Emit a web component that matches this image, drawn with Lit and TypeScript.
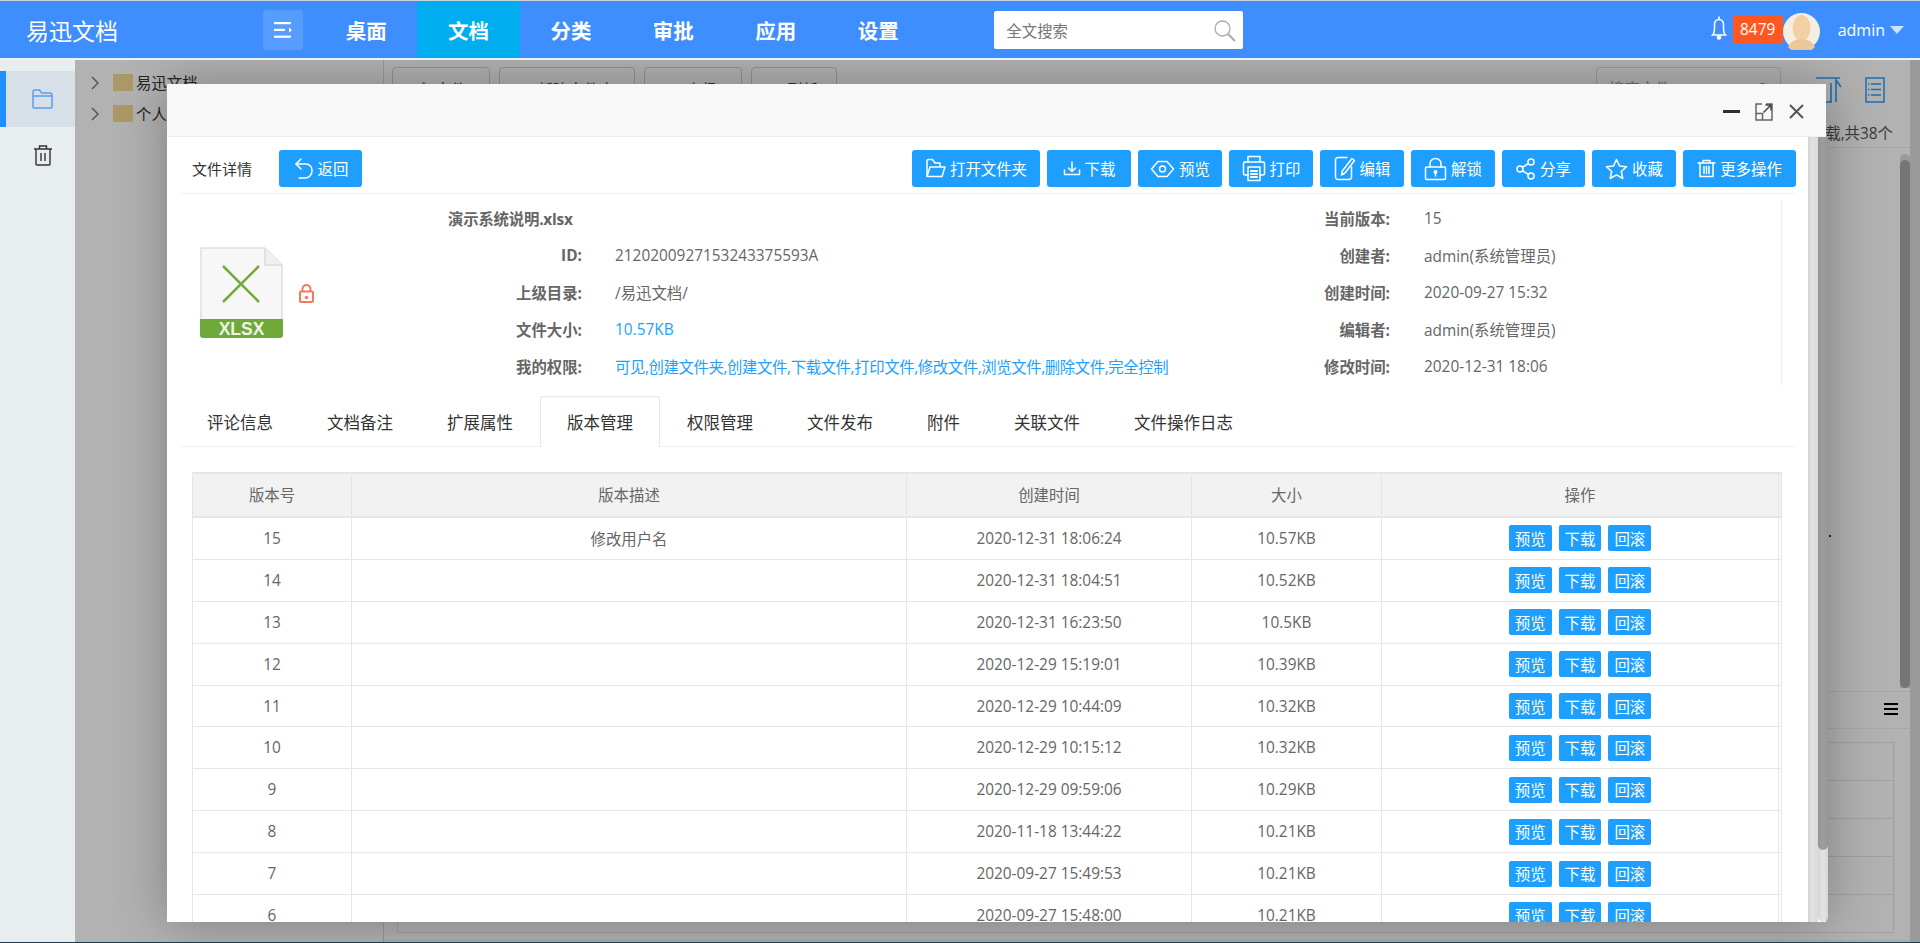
import { LitElement, html, css, svg } from 'lit';
import { customElement } from 'lit/decorators.js';

const stroke = (w: number, h: number, body: unknown, sw = 1.5) => html`<svg width=${w} height=${h} viewBox="0 0 ${w} ${h}" fill="none" stroke="currentColor" stroke-width=${sw} stroke-linejoin="round" stroke-linecap="round">${body}</svg>`;

const icons = {
  back: stroke(21, 24, svg`<path d="M8 2 3 7l5 5"/><path d="M3 7h10a6 6 0 0 1 6 6v1a7 7 0 0 1-7 7H6"/>`),
  folder: stroke(21, 21, svg`<path d="M2 18V3a1.5 1.5 0 0 1 1.5-1.5h4L10 5h5v3"/><path d="M2 18.5 5 9h15l-3 9.500z"/>`),
  download: stroke(18, 15, svg`<path d="M9 1v9"/><path d="M5.500 7 9 10.500 12.500 7"/><path d="M1.500 9v4.500h15V9"/>`),
  eye: stroke(25, 18, svg`<path d="M1.500 9 8 1.500h9L23.500 9 17 16.500H8z"/><circle cx="12.500" cy="9" r="3"/>`),
  print: stroke(24, 27, svg`<path d="M6 7V1.500h12V7"/><path d="M6 20H3a1.500 1.500 0 0 1-1.500-1.500v-10A1.500 1.500 0 0 1 3 7h18a1.500 1.500 0 0 1 1.500 1.500v10A1.500 1.500 0 0 1 21 20h-3"/><rect x="6" y="12" width="12" height="13.500"/><path d="M9 16h6M9 19h6M9 22h6" stroke-width="2"/>`),
  edit: stroke(22, 25, svg`<path d="M13 1.500H4A2.500 2.500 0 0 0 1.500 4v17A2.500 2.500 0 0 0 4 23.500h11a2.500 2.500 0 0 0 2.500-2.500V11"/><path d="M18 2.500l2.500 2L11 17l-3.500 2 .8-4z"/>`),
  lock: stroke(23, 24, svg`<rect x="1.500" y="10" width="20" height="12.500" rx="1"/><path d="M6 10V6.500a5.500 5 0 0 1 11 0V10"/><circle cx="11.500" cy="15" r="1.200"/><path d="M11.500 16v3"/>`),
  share: stroke(20, 22, svg`<circle cx="4" cy="11" r="3"/><circle cx="15" cy="4" r="3"/><circle cx="15" cy="18" r="3"/><path d="M6.500 9.200 12.500 5.500M6.500 12.800l6 3.700"/>`),
  star: stroke(23, 22, svg`<path d="M11.500 1.500 14.500 8l7 .8-5.200 4.700 1.500 7-6.300-3.600L5.200 20.500l1.500-7L1.500 8.800l7-.8z"/>`),
  trash: stroke(19, 19, svg`<path d="M1 4h17M6 4V1.500h7V4"/><path d="M3 4v13.500h13V4"/><path d="M7 7.500v7M9.500 7.500v7M12 7.500v7"/>`),
  file: html`<svg width="83" height="92" viewBox="0 0 83 92">
    <path d="M1 1h64l17 17v56H1z" fill="#f7f7f7" stroke="#e0e0e0" stroke-width="1.500"/>
    <path d="M65 1v17h17" fill="#f0f0f0" stroke="#dcdcdc" stroke-width="1.500"/>
    <path d="M23 19 59 55M59 19 23 55" stroke="#74a93e" stroke-width="2.500"/>
    <path d="M0 72h83v16a3 3 0 0 1-3 3H3a3 3 0 0 1-3-3z" fill="#70a83a"/>
    <text x="41.500" y="88" text-anchor="middle" fill="#eef3e2" font-family="Liberation Sans" font-size="17.500" font-weight="700">XLSX</text>
  </svg>`,
  redLock: html`<svg width="15" height="19" viewBox="0 0 15 19" fill="none" stroke="#f4785c" stroke-width="2">
    <rect x="1" y="7.500" width="13" height="10.500" rx="1"/><path d="M3.500 7.500V5a4 4 0 0 1 8 0v2.500"/><circle cx="7.500" cy="13.500" r=".8" fill="#f4785c"/>
  </svg>`,
  toggle: html`<svg width="18" height="16" viewBox="0 0 18 16" fill="#fff">
    <rect width="17" height="2.200" y="0"/><rect width="11" height="2.200" y="6.800"/><rect width="17" height="2.200" y="13.600"/><path d="M15 5.500 18 8l-3 2.500z"/>
  </svg>`,
  bell: html`<svg width="16" height="24" viewBox="0 0 16 24" fill="none" stroke="#fff" stroke-width="1.500">
    <path d="M1.500 19c1.500-1.500 2-3 2-7V8.500C3.500 5.500 5.500 3.500 8 3.500s4.500 2 4.500 5V12c0 4 .5 5.500 2 7z"/><path d="M8 .5v3"/><circle cx="8" cy="21.500" r="1.500" fill="#fff"/>
  </svg>`,
  avatar: html`<svg width="37" height="37" viewBox="0 0 37 37">
    <circle cx="18.500" cy="18.500" r="18.500" fill="#f5eee2"/>
    <ellipse cx="18.500" cy="15" rx="9" ry="13" fill="#f2d0a4"/>
    <path d="M5 34c3-6 8-8 13.500-8S29 28 32 34a18.500 18.500 0 0 1-27 0z" fill="#ecc79a"/>
  </svg>`,
  search: html`<svg width="22" height="22" viewBox="0 0 22 22" fill="none" stroke="#a9adb3" stroke-width="1.300">
    <circle cx="8.500" cy="8.500" r="7.500"/><path d="m14 14 7 7" stroke-width="2.200"/>
  </svg>`,
  sideFolder: html`<svg width="21" height="20" viewBox="0 0 21 20" fill="none" stroke="#5b9cf2" stroke-width="1.500">
    <path d="M1 18V2.500A1.500 1.500 0 0 1 2.500 1h5l2 3H18a2 2 0 0 1 2 2v12a1 1 0 0 1-1 1H2a1 1 0 0 1-1-1z"/><path d="M1 7h19"/>
  </svg>`,
  sideTrash: html`<svg width="20" height="21" viewBox="0 0 20 21" fill="none" stroke="#333" stroke-width="1.400">
    <path d="M1 4h18M6.500 4V1h7v3"/><path d="M3 4v15a1 1 0 0 0 1 1h12a1 1 0 0 0 1-1V4"/><path d="M8 8v8M12 8v8"/>
  </svg>`,
  sort: html`<svg width="26" height="26" viewBox="0 0 26 26" fill="none" stroke="#2f9fff" stroke-width="1.600">
    <path d="M0 1h24M0 25h16M0 11h9M0 17h9M15 6v19M20 25V3l5 7"/>
  </svg>`,
  list: html`<svg width="20" height="26" viewBox="0 0 20 26" fill="none" stroke="#2f9fff" stroke-width="1.500">
    <rect x="1" y="1" width="18" height="24"/><path d="M6 7h10M6 12.500h10M6 18h10M3 7h1.500M3 12.500h1.500M3 18h1.500"/>
  </svg>`,
  chevron: html`<svg width="8" height="14" viewBox="0 0 8 14" fill="none" stroke="#7b7b7b" stroke-width="1.500"><path d="m1 1 6 6-6 6"/></svg>`,
  treeFolder: html`<svg width="20" height="17" viewBox="0 0 20 17"><rect width="20" height="17" fill="#f8dc92"/></svg>`,
  min: html`<svg width="17" height="3"><rect width="17" height="3" fill="#2d2d3b"/></svg>`,
  max: html`<svg width="18" height="18" viewBox="0 0 18 18" fill="none" stroke="#666" stroke-width="1.500">
    <path d="M7 1H1v16h16V1h-6"/><path d="M1 10.500h6.500V17"/><path d="M8.500 9.500 16 2M10.500 2H16v5.500" stroke="#444"/>
  </svg>`,
  close: html`<svg width="15" height="15" viewBox="0 0 15 15" fill="none" stroke="#555" stroke-width="2"><path d="m1 1 13 13M14 1 1 14"/></svg>`,
};

const toolbar = [
  { label: '打开文件夹', icon: icons.folder, width: 128 },
  { label: '下载', icon: icons.download, width: 84 },
  { label: '预览', icon: icons.eye, width: 84 },
  { label: '打印', icon: icons.print, width: 84 },
  { label: '编辑', icon: icons.edit, width: 84 },
  { label: '解锁', icon: icons.lock, width: 84 },
  { label: '分享', icon: icons.share, width: 83 },
  { label: '收藏', icon: icons.star, width: 84 },
  { label: '更多操作', icon: icons.trash, width: 113 },
];

const tabs = ['评论信息', '文档备注', '扩展属性', '版本管理', '权限管理', '文件发布', '附件', '关联文件', '文件操作日志'];

const ghosts = [
  { label: '⇧ 文件', width: 98 },
  { label: '▭ 新建文件夹', width: 136 },
  { label: '▭ 上级', width: 98 },
  { label: '↻ 刷新', width: 86 },
];

const versions = [
  ['15', '修改用户名', '2020-12-31 18:06:24', '10.57KB'],
  ['14', '', '2020-12-31 18:04:51', '10.52KB'],
  ['13', '', '2020-12-31 16:23:50', '10.5KB'],
  ['12', '', '2020-12-29 15:19:01', '10.39KB'],
  ['11', '', '2020-12-29 10:44:09', '10.32KB'],
  ['10', '', '2020-12-29 10:15:12', '10.32KB'],
  ['9', '', '2020-12-29 09:59:06', '10.29KB'],
  ['8', '', '2020-11-18 13:44:22', '10.21KB'],
  ['7', '', '2020-09-27 15:49:53', '10.21KB'],
  ['6', '', '2020-09-27 15:48:00', '10.21KB'],
];

@customElement('app-root')
export class AppRoot extends LitElement {
  static styles = css`
    :host {
      display: block;
      height: 943px;
      overflow: hidden;
      background: #1d3a4a;
      font-family: "Open Sans", "Noto Sans CJK SC", sans-serif;
      font-size: 15.4px;
      color: #666;
      white-space: nowrap;
    }
    * { box-sizing: border-box; }
    svg { display: block; flex: none; }

    .header {
      display: flex;
      align-items: center;
      height: 60px;
      background: #3e8eff;
      border-top: 1px solid #c9d3e0;
      border-bottom: 2px solid #e6f0ff;
      color: #fff;
    }
    .logo { width: 263px; padding-left: 26px; font-size: 23px; }
    .toggle {
      display: flex;
      align-items: center;
      justify-content: center;
      width: 40px;
      height: 40px;
      margin-right: 12px;
      border-radius: 3px;
      background: rgba(255, 255, 255, 0.13);
    }
    .nav { display: flex; align-self: stretch; }
    .nav a {
      display: flex;
      align-items: center;
      justify-content: center;
      width: 102.4px;
      font-size: 20.5px;
      font-weight: 700;
    }
    .nav a.on { background: #00adee; }
    .search {
      display: flex;
      align-items: center;
      justify-content: space-between;
      width: 249px;
      height: 38px;
      margin-left: 65px;
      padding: 2px 7px 0 12px;
      border-radius: 2px;
      background: #fff;
      color: #777;
    }
    .user { display: flex; align-items: center; margin-left: auto; padding-right: 16px; }
    .user .bell { margin: -4px 6px 0 0; }
    .badge {
      display: flex;
      align-items: center;
      justify-content: center;
      width: 50px;
      height: 27px;
      background: #ff5722;
    }
    .avatar { margin-top: 4px; }
    .name { margin-left: 18px; font-size: 16px; }
    .caret {
      width: 0;
      height: 0;
      margin-left: 5px;
      border: 7px solid transparent;
      border-top: 8px solid #cfe1ff;
      border-bottom: 0;
    }

    .body { display: flex; height: 882px; }
    .side { width: 75px; flex: none; padding-top: 11px; background: #e8edf0; }
    .side-item {
      display: flex;
      align-items: center;
      justify-content: center;
      height: 56px;
      padding-left: 10px;
    }
    .side-item.on { background: #d6e0e6; border-left: 6px solid #1e90ff; padding-left: 4px; }

    .content { position: relative; flex: 1; display: flex; overflow: hidden; background: #fff; }
    .shade { position: absolute; inset: 0; background: rgba(0, 0, 0, 0.3); }

    .tree { width: 309px; flex: none; padding-top: 7px; border-right: 1px solid #ddd; color: #333; }
    .tree-row { display: flex; align-items: center; height: 31px; padding-left: 16px; }
    .tree-row span { margin-left: 3px; }
    .tree-row svg:first-child { margin-right: 14px; }

    .page { flex: 1; display: flex; flex-direction: column; min-width: 0; }
    .page-top { display: flex; flex-direction: column; height: 88px; padding: 7px 0 3px 8px; border-bottom: 1px solid #eee; }
    .page-row { display: flex; }
    .ghost {
      display: flex;
      align-items: center;
      justify-content: center;
      height: 42px;
      margin-right: 9px;
      padding-top: 2px;
      border: 1px solid #c6d4ea;
      border-radius: 4px;
      color: #444;
    }
    .ghost-search {
      display: flex;
      align-items: center;
      justify-content: space-between;
      width: 185px;
      height: 42px;
      margin-left: 750px;
      padding: 2px 12px;
      border: 1px solid #ddd;
      border-radius: 4px;
      color: #999;
    }
    .page-tools { display: flex; align-items: flex-start; gap: 23px; margin-left: 35px; padding-top: 10px; }
    .count { margin: auto 17px 0 auto; color: #555; }
    .page-list { display: flex; justify-content: flex-end; flex: 1; padding-top: 6px; }
    .inner-bar { width: 10px; height: 534px; padding-top: 6px; border-radius: 5px 5px 0 0; background: #ddd; }
    .inner-bar i { display: block; height: 100%; border-radius: 5px; background: #aaa; }
    .dot { position: absolute; left: 1754px; top: 475px; width: 2px; height: 2px; background: #333; }
    .preview { height: 250px; flex: none; border-top: 1px solid #eee; border-bottom: 1px solid #eee; padding-left: 13px; }
    .preview-top { display: flex; flex-direction: column; align-items: flex-end; gap: 3px; height: 37px; margin-left: -13px; padding: 11px 12px 0 0; border-bottom: 1px solid #eee; }
    .preview-top i { display: block; width: 14px; height: 2px; background: #000; }
    .ptable { margin: 13px 16px 0 0; border: 1px solid #e6e6e6; }
    .ptable div { height: 38px; border-bottom: 1px solid #e6e6e6; }
    .ptable div:last-child { border-bottom: 0; height: 37px; }
    .outer-bar { width: 10px; flex: none; background: #ddd; }
    .footer { height: 1px; }

    .modal {
      position: absolute;
      left: 92px;
      top: 24px;
      width: 1659px;
      height: 838px;
      display: flex;
      flex-direction: column;
      background: #fff;
      box-shadow: 1px 1px 50px rgba(0, 0, 0, 0.3);
    }
    .modal-title {
      display: flex;
      align-items: center;
      justify-content: flex-end;
      flex: none;
      height: 53px;
      padding: 3px 22px 0 0;
      background: #f8f8f8;
      border-bottom: 1px solid #eee;
    }
    .modal-title svg:nth-child(2) { margin: 0 16px 0 15px; }
    .modal-body { flex: 1; display: flex; min-height: 0; }
    .main { flex: 1; min-width: 0; overflow: hidden; padding: 0 12px 0 13px; }

    .bar-a {
      width: 10px;
      flex: none;
      background: linear-gradient(90deg, #d2d2d2, #e2e2e2 40%, #dadada);
    }
    .bar-b {
      width: 10px;
      flex: none;
      margin-right: -2px;
      border-radius: 0 0 5px 5px;
      background: linear-gradient(90deg, #d6d6d6, #e4e4e4 50%, #d6d6d6);
    }
    .bar-b i { display: block; height: 713px; border-radius: 0 0 5px 5px; background: linear-gradient(90deg, #959595, #9d9d9d 50%, #969696); }

    .actions {
      display: flex;
      align-items: center;
      height: 57px;
      padding: 7px 0 0 12px;
      border-bottom: 1px solid #f0f0f0;
    }
    .actions .title { width: 87px; color: #333; font-size: 15px; }
    .btn {
      display: flex;
      align-items: center;
      justify-content: center;
      gap: 4px;
      height: 37px;
      border-radius: 3px;
      background: #1e9fff;
      color: #fff;
    }
    .back { width: 83px; }
    .btns { display: flex; gap: 7px; margin-left: auto; }

    .info { display: flex; margin-right: 14px; padding-top: 6px; }
    .info-icon { display: flex; align-items: center; gap: 16px; width: 268px; height: 139px; padding: 47px 0 0 20px; }
    .info-grid {
      flex: 1;
      display: grid;
      grid-template-columns: 134px 708px 100px 1fr;
      grid-auto-rows: 37px;
      align-items: center;
      border-right: 1px solid #eee;
    }
    .info-grid b { font-weight: 700; text-align: right; }
    .info-grid .name-line { text-align: left; grid-column: 1 / 3; letter-spacing: -0.2px; }
    .val { padding-left: 33px; }
    .val.link { color: #1e9fff; }
    .val.perm { letter-spacing: -0.4px; }
    .val.r { padding-left: 34px; }

    .tabs { display: flex; height: 51px; margin-top: 11px; border-bottom: 1px solid #f0f0f0; }
    .tab {
      display: flex;
      align-items: center;
      height: 51px;
      padding: 0 26px;
      border: 1px solid transparent;
      border-bottom: 0;
      color: #333;
      font-size: 16.500px;
    }
    .tab.on { background: #fff; border-color: #e6e6e6; border-radius: 2px 2px 0 0; }

    .table { margin: 25px 14px 0 12px; border: 1px solid #e6e6e6; border-top-width: 2px; border-bottom: 0; }
    .tr {
      display: grid;
      grid-template-columns: 159px 555px 285px 190px 397px 2px;
      height: 41.900px;
      border-bottom: 1px solid #e6e6e6;
    }
    .tr.head { height: 44px; padding-bottom: 1px; background: #f2f2f2; border-bottom-width: 2px; }
    .td {
      display: flex;
      align-items: center;
      justify-content: center;
      gap: 7px;
      border-right: 1px solid #e6e6e6;
    }
    .td:last-child { border-right: 0; }
    .mini {
      display: flex;
      align-items: center;
      height: 26px;
      padding: 0 6px;
      border-radius: 2px;
      background: #1e9fff;
      color: #fff;
    }
  `;

  render() {
    return html`
      <div class="header">
        <div class="logo">易迅文档</div>
        <div class="toggle">${icons.toggle}</div>
        <div class="nav">
          <a>桌面</a><a class="on">文档</a><a>分类</a><a>审批</a><a>应用</a><a>设置</a>
        </div>
        <div class="search"><span>全文搜索</span>${icons.search}</div>
        <div class="user">
          <div class="bell">${icons.bell}</div>
          <div class="badge">8479</div>
          <div class="avatar">${icons.avatar}</div>
          <span class="name">admin</span>
          <span class="caret"></span>
        </div>
      </div>
      <div class="body">
        <div class="side">
          <div class="side-item on">${icons.sideFolder}</div>
          <div class="side-item">${icons.sideTrash}</div>
        </div>
        <div class="content">
          ${this.renderPage()}
          <div class="shade"></div>
          ${this.renderModal()}
        </div>
      </div>
    `;
  }

  renderPage() {
    return html`
      <div class="tree">
        <div class="tree-row">${icons.chevron}${icons.treeFolder}<span>易迅文档</span></div>
        <div class="tree-row">${icons.chevron}${icons.treeFolder}<span>个人文档</span></div>
      </div>
      <div class="page">
        <div class="page-top">
          <div class="page-row">
            ${ghosts.map((g) => html`<div class="ghost" style="width:${g.width}px">${g.label}</div>`)}
            <div class="ghost-search"><span>搜索文件</span>⚲</div>
            <div class="page-tools">${icons.sort}${icons.list}</div>
          </div>
          <div class="count">已下载,共38个</div>
        </div>
        <div class="page-list"><div class="inner-bar"><i></i></div></div>
        <div class="preview">
          <div class="preview-top"><i></i><i></i><i></i></div>
          <div class="ptable"><div></div><div></div><div></div><div></div><div></div></div>
        </div>
        <div class="footer"></div>
      </div>
      <div class="outer-bar"></div>
      <div class="dot"></div>
    `;
  }

  renderModal() {
    return html`
      <div class="modal">
        <div class="modal-title">${icons.min}${icons.max}${icons.close}</div>
        <div class="modal-body">
          <div class="main">
            <div class="actions">
              <span class="title">文件详情</span>
              <div class="btn back">${icons.back}返回</div>
              <div class="btns">
                ${toolbar.map((b) => html`<div class="btn" style="width:${b.width}px">${b.icon}${b.label}</div>`)}
              </div>
            </div>
            <div class="info">
              <div class="info-icon">${icons.file}${icons.redLock}</div>
              <div class="info-grid">
                <b class="name-line">演示系统说明.xlsx</b>
                <b>当前版本:</b><span class="val r">15</span>
                <b>ID:</b><span class="val">2120200927153243375593A</span>
                <b>创建者:</b><span class="val r">admin(系统管理员)</span>
                <b>上级目录:</b><span class="val">/易迅文档/</span>
                <b>创建时间:</b><span class="val r">2020-09-27 15:32</span>
                <b>文件大小:</b><span class="val link">10.57KB</span>
                <b>编辑者:</b><span class="val r">admin(系统管理员)</span>
                <b>我的权限:</b><span class="val link perm">可见,创建文件夹,创建文件,下载文件,打印文件,修改文件,浏览文件,删除文件,完全控制</span>
                <b>修改时间:</b><span class="val r">2020-12-31 18:06</span>
              </div>
            </div>
            <div class="tabs">
              ${tabs.map((t) => html`<div class="tab ${t === '版本管理' ? 'on' : ''}">${t}</div>`)}
            </div>
            <div class="table">
              <div class="tr head">
                <div class="td">版本号</div><div class="td">版本描述</div><div class="td">创建时间</div><div class="td">大小</div><div class="td">操作</div><div class="td"></div>
              </div>
              ${versions.map((v) => html`
                <div class="tr">
                  ${v.map((c) => html`<div class="td">${c}</div>`)}
                  <div class="td"><span class="mini">预览</span><span class="mini">下载</span><span class="mini">回滚</span></div>
                  <div class="td"></div>
                </div>
              `)}
            </div>
          </div>
          <div class="bar-a"></div>
          <div class="bar-b"><i></i></div>
        </div>
      </div>
    `;
  }
}
